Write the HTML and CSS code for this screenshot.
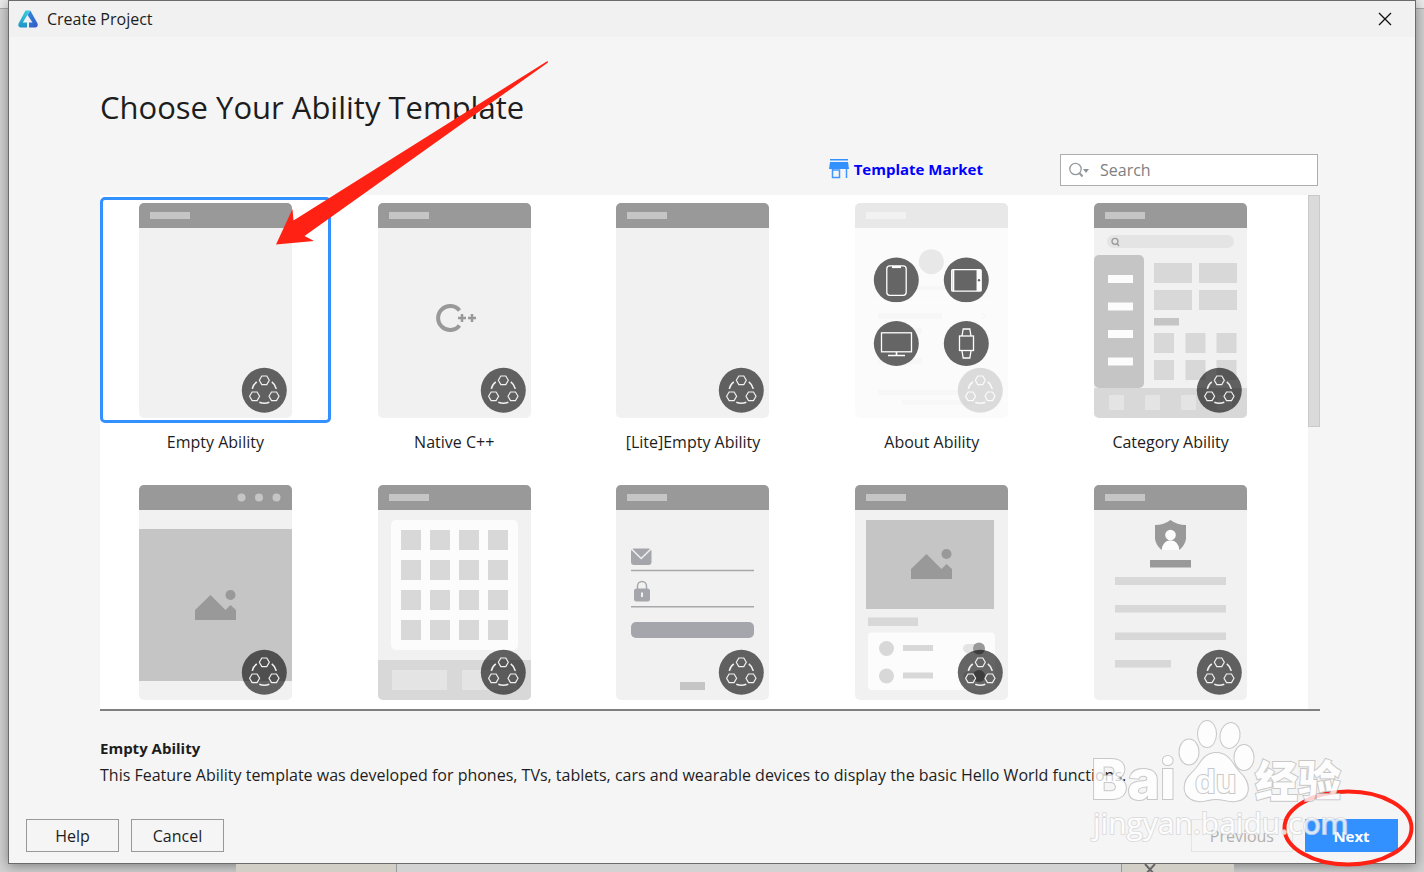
FILE: index.html
```html
<!DOCTYPE html>
<html lang="en">
<head>
<meta charset="utf-8">
<title>Create Project</title>
<link rel="stylesheet" href="styles.css">
</head>
<body>
<svg class="defs" aria-hidden="true">
  <defs>
    <g id="frame">
      <rect width="153" height="215" rx="5" fill="#f1f1f1"/>
      <path d="M0 25V5a5 5 0 0 1 5-5h143a5 5 0 0 1 5 5v20z" fill="#999"/>
    </g>
    <rect id="caption" x="11" y="9" width="40" height="7" fill="#c5c5c5"/>
    <path id="hex" d="M-5 0L-2.5-4.3h5L5 0L2.5 4.3h-5z"/>
    <g id="badge">
      <circle cx="125.3" cy="187.3" r="22.5" fill="#000" fill-opacity=".6"/>
      <g transform="translate(125.3 187.3)" fill="none" stroke="#f1f1f1" stroke-width="1.2">
        <use href="#hex" y="-10"/>
        <use href="#hex" x="-9.7" y="6"/>
        <use href="#hex" x="9.7" y="6"/>
        <path d="M-12-1.5Q-11-6-7.5-8.5M12-1.5Q11-6 7.5-8.5M-5 12Q0 14 5 12" stroke-width="1.6"/>
      </g>
    </g>
    <g id="photo" fill="#999">
      <path d="M56 15L71.500 0L86.500 15L91.500 10L97 15V25H56z"/>
      <circle cx="91.500" cy="0" r="5"/>
    </g>
  </defs>
</svg>

<main class="dialog">
  <header class="titlebar">
    <svg class="logo" viewBox="0 0 20 18" aria-hidden="true">
      <defs>
        <linearGradient id="lg1" x1="0" y1="0" x2="0" y2="1"><stop offset="0" stop-color="#35d0da"/><stop offset="1" stop-color="#1e93c8"/></linearGradient>
        <linearGradient id="lg2" x1="0" y1="0" x2="1" y2="1"><stop offset="0" stop-color="#2c8ce0"/><stop offset="1" stop-color="#3558c4"/></linearGradient>
      </defs>
      <path d="M7.500 0.500H12L4.800 12.500H9V17.500H2.500Q-0.500 17 0.600 13.500z" fill="url(#lg1)"/>
      <path d="M9.500 5L12.300 0.500L19.500 13.500Q20.500 17 17.500 17.500H11V12.500H14.500z" fill="url(#lg2)"/>
    </svg>
    <span class="titlebar-text">Create Project</span>
    <button class="close" type="button" aria-label="Close">
      <svg viewBox="0 0 14 14"><path d="M1 1L13 13M13 1L1 13" stroke="#111" stroke-width="1.3" fill="none"/></svg>
    </button>
  </header>

  <section class="content">
    <h1>Choose Your Ability Template</h1>
    <div class="tools">
      <a class="market" href="#">
        <svg viewBox="0 0 20 20" aria-hidden="true">
          <path d="M1 0h18v1.500H1zM1 3h18l1 7H0z" fill="#3391ff"/>
          <path d="M3.500 10v8.500h7v-7.500h-7M17.500 10v9" fill="none" stroke="#3f97ff" stroke-width="1.500"/>
        </svg>
        <span>Template Market</span>
      </a>
      <label class="search">
        <svg viewBox="0 0 20 16" aria-hidden="true">
          <circle cx="6.500" cy="7" r="5.700" fill="none" stroke="#949a9e" stroke-width="1.300"/>
          <path d="M10.500 11L13.500 14.500" stroke="#949a9e" stroke-width="2"/>
          <path d="M14 7h6l-3 4z" fill="#8b9196"/>
        </svg>
        <input type="search" placeholder="Search" aria-label="Search">
      </label>
    </div>

    <div class="list">
      <div class="grid">
        <button class="card selected" type="button">
          <span class="thumb"><svg viewBox="0 0 153 215"><use href="#frame"/><use href="#caption"/><use href="#badge"/></svg></span>
          <span class="name">Empty Ability</span>
        </button>
        <button class="card" type="button">
          <span class="thumb"><svg viewBox="0 0 153 215"><use href="#frame"/><use href="#caption"/>
            <path d="M81.500 107.500A12 12 0 1 0 81.500 122.500" fill="none" stroke="#999" stroke-width="4"/>
            <path d="M80 115h8M84 111v8M90 115h8M94 111v8" stroke="#999" stroke-width="2.500"/>
            <use href="#badge"/></svg></span>
          <span class="name">Native C++</span>
        </button>
        <button class="card" type="button">
          <span class="thumb"><svg viewBox="0 0 153 215"><use href="#frame"/><use href="#caption"/><use href="#badge"/></svg></span>
          <span class="name">[Lite]Empty Ability</span>
        </button>
        <button class="card" type="button">
          <span class="thumb"><svg viewBox="0 0 153 215">
            <g opacity=".22"><use href="#frame"/><use href="#caption"/><circle cx="76.300" cy="58.700" r="12.500" fill="#999"/>
              <path d="M50 83h50v4H50zM23 110h64v6H23zM23 125h44v6H23zM23 155h44v6H23zM23 187h80v5H23zM47 197h70v5H47z" fill="#dcdcdc"/>
              <path d="M127 110l3 3-3 3" fill="none" stroke="#ccc"/><use href="#badge"/></g>
            <g fill="#656565"><circle cx="41.300" cy="77" r="22.500"/><circle cx="111.300" cy="77" r="22.500"/><circle cx="41.300" cy="140.500" r="22.500"/><circle cx="111.300" cy="140.500" r="22.500"/></g>
            <path d="M16 99.300h120v2H16z" fill="#fcfcfc"/>
            <g fill="none" stroke="#fff" stroke-width="1.300">
              <rect x="31.800" y="62.800" width="19.400" height="29.500" rx="3"/>
              <path d="M37 64h9" stroke-width="2.200"/>
              <rect x="96.700" y="66.700" width="29.500" height="21.500" rx="1"/>
              <path d="M98.300 67v21" stroke-width="2"/>
              <path d="M123.800 67v21" stroke-width="4.500"/>
              <rect x="26.500" y="129.800" width="30" height="19"/>
              <path d="M33 152.500h17M41.500 149v3" stroke-width="1.600"/>
              <rect x="104.500" y="133" width="14" height="14.500"/>
              <path d="M107 133l1.200-7h6.600l1.200 7M107 148l1.200 7h6.600l1.200-7"/>
            </g>
            <circle cx="124" cy="77.300" r="1.200" fill="#656565"/></svg></span>
          <span class="name">About Ability</span>
        </button>
        <button class="card" type="button">
          <span class="thumb"><svg viewBox="0 0 153 215"><use href="#frame"/><use href="#caption"/>
            <rect x="13" y="32" width="127" height="13" rx="6.500" fill="#e4e4e4"/>
            <path d="M24 38.300a3 3 0 1 0-6 0a3 3 0 1 0 6 0M23 40.500l2 2.500" fill="none" stroke="#999" stroke-width="1.300"/>
            <path d="M0 185h153v25a5 5 0 0 1-5 5H5a5 5 0 0 1-5-5z" fill="#d8d8d8"/>
            <rect x="0" y="52" width="50" height="133" rx="5" fill="#c5c5c5"/>
            <path d="M14 72h25v8H14zM14 99.500h25v8H14zM14 127h25v8H14zM14 154.500h25v8H14z" fill="#fcfcfc"/>
            <path d="M60 60h38v20H60zM105 60h38v20h-38zM60 87h38v20H60zM105 87h38v20h-38zM60 130h20v20H60zM91.500 130h20v20h-20zM122.500 130h20v20h-20zM60 157h20v20H60zM91.500 157h20v20h-20zM122.500 157h20v20h-20z" fill="#d8d8d8"/>
            <path d="M60 115h25v7.500H60z" fill="#c5c5c5"/>
            <path d="M15 192h15v15H15zM51 192h15v15H51zM87 192h15v15H87zM123 192h15v15h-15z" fill="#e4e4e4"/>
            <use href="#badge"/></svg></span>
          <span class="name">Category Ability</span>
        </button>

        <button class="card" type="button" aria-label="Full screen image template">
          <span class="thumb"><svg viewBox="0 0 153 215"><use href="#frame"/>
            <g fill="#c5c5c5"><circle cx="102.500" cy="12.500" r="4"/><circle cx="120" cy="12.500" r="4"/><circle cx="137.500" cy="12.500" r="4"/><path d="M0 44h153v152H0z"/></g>
            <use href="#photo" y="110"/><use href="#badge"/></svg></span>
        </button>
        <button class="card" type="button" aria-label="Grid template">
          <span class="thumb"><svg viewBox="0 0 153 215"><use href="#frame"/><use href="#caption"/>
            <rect x="13" y="35" width="127" height="130" rx="5" fill="#fcfcfc"/>
            <path d="M23 45h20v20H23zM52 45h20v20H52zM81 45h20v20H81zM110 45h20v20h-20zM23 75h20v20H23zM52 75h20v20H52zM81 75h20v20H81zM110 75h20v20h-20zM23 105h20v20H23zM52 105h20v20H52zM81 105h20v20H81zM110 105h20v20h-20zM23 135h20v20H23zM52 135h20v20H52zM81 135h20v20H81zM110 135h20v20h-20z" fill="#d8d8d8"/>
            <path d="M0 175h153v35a5 5 0 0 1-5 5H5a5 5 0 0 1-5-5z" fill="#d8d8d8"/>
            <path d="M14 185h55v20H14zM84 185h55v20H84z" fill="#e4e4e4"/>
            <use href="#badge"/></svg></span>
        </button>
        <button class="card" type="button" aria-label="Login template">
          <span class="thumb"><svg viewBox="0 0 153 215"><use href="#frame"/><use href="#caption"/>
            <rect x="15" y="63.500" width="20.500" height="16.500" rx="3" fill="#a5a6ab"/>
            <path d="M15.500 64l9.700 9.500L35 64" fill="none" stroke="#f1f1f1" stroke-width="1.500"/>
            <path d="M15 85.500h123M15 121.700h123" stroke="#a8a8aa" stroke-width="1.400"/>
            <rect x="18" y="103.500" width="16" height="13" rx="2.500" fill="#a5a6ab"/>
            <path d="M21.500 104v-3a4.500 4.500 0 0 1 9 0v3" fill="none" stroke="#a5a6ab" stroke-width="1.400"/>
            <path d="M26 107.500v4.500" stroke="#f1f1f1" stroke-width="2"/>
            <rect x="15" y="137" width="123" height="16" rx="5" fill="#a5a6ab"/>
            <path d="M64 197h25v8H64z" fill="#c5c5c5"/>
            <use href="#badge"/></svg></span>
        </button>
        <button class="card" type="button" aria-label="Settings template">
          <span class="thumb"><svg viewBox="0 0 153 215"><use href="#frame"/><use href="#caption"/>
            <path d="M11 35h128v89H11z" fill="#c5c5c5"/><use href="#photo" y="69"/>
            <path d="M13 132.500h50v8.500H13z" fill="#d8d8d8"/>
            <rect x="13" y="147.500" width="127" height="57.500" rx="4" fill="#fcfcfc"/>
            <g fill="#d8d8d8"><circle cx="31.500" cy="163.500" r="7.500"/><circle cx="31.500" cy="191" r="7.500"/><path d="M48 160h30v6H48zM48 187.500h30v6H48z"/></g>
            <rect x="108" y="159" width="22" height="9" rx="4.500" fill="#e4e4e4"/><rect x="108" y="186.500" width="22" height="9" rx="4.500" fill="#e4e4e4"/>
            <g fill="#999"><circle cx="124" cy="163.500" r="6"/><circle cx="124" cy="191" r="6"/></g>
            <use href="#badge"/></svg></span>
        </button>
        <button class="card" type="button" aria-label="Privacy template">
          <span class="thumb"><svg viewBox="0 0 153 215"><use href="#frame"/><use href="#caption"/>
            <path d="M76.500 35Q83 40 92 40V54Q91 60 85.500 65Q84 55.500 76.500 55.500Q69 55.500 67.500 65Q62 60 61 54V40Q70 40 76.500 35z" fill="#999"/>
            <circle cx="76.500" cy="50" r="5.300" fill="#fcfcfc"/>
            <path d="M68 65Q69 55.500 76.500 55.500Q84 55.500 85 65z" fill="#fcfcfc"/>
            <path d="M56 75h41v7.500H56z" fill="#999"/>
            <path d="M21 92h111v8H21zM21 120h111v7.500H21zM21 147.500h111v7.500H21zM21 175h56v7.500H21z" fill="#d8d8d8"/>
            <use href="#badge"/></svg></span>
        </button>
      </div>
      <div class="scrollbar"><div class="scroll-thumb"></div></div>
    </div>

    <div class="summary">
      <h2>Empty Ability</h2>
      <p>This Feature Ability template was developed for phones, TVs, tablets, cars and wearable devices to display the basic Hello World functions.</p>
    </div>
  </section>

  <footer class="actions">
    <button type="button">Help</button>
    <button type="button">Cancel</button>
    <button class="previous" type="button" disabled>Previous</button>
    <button class="next" type="button">Next</button>
  </footer>
</main>

<div class="backdrop" aria-hidden="true">
  <span class="seg tan"></span>
  <span class="seg light"></span>
  <span class="seg tan short"><svg viewBox="0 0 12 12"><path d="M1 0L11 11M11 0L1 11" stroke="#666" stroke-width="2"/></svg></span>
</div>

<svg class="arrow" viewBox="0 0 272 184" aria-hidden="true">
  <path d="M0 183.500L16.500 148L17.500 159.500L271.500 0L272 1.500L28.500 175L38 180z" fill="#ff2113"/>
</svg>

<svg class="ring" viewBox="0 0 132 78" aria-hidden="true">
  <ellipse cx="66" cy="39" rx="63.500" ry="36.500" fill="none" stroke="#ff2113" stroke-width="4"/>
</svg>

<svg class="watermark" viewBox="0 0 260 130" aria-hidden="true">
  <g class="mark">
    <text class="bai" x="1" y="84">Bai</text>
    <ellipse cx="99" cy="37" rx="9.500" ry="12.500"/>
    <ellipse cx="117" cy="19" rx="9" ry="13"/>
    <ellipse cx="140" cy="20.500" rx="9.500" ry="12.500" transform="rotate(10 140 20.500)"/>
    <ellipse cx="154" cy="42.500" rx="9.500" ry="12.500"/>
    <path d="M126 38C140 38 142 50 150 58C162 69 160 85 145 86C138 87 133 84 126 84C119 84 115 87 108 86C92 84 91 68 102 58C111 50 113 38 126 38z"/>
    <text class="du" x="105" y="78">du</text>
    <text class="cjk" x="165" y="82">经验</text>
    <text class="site" x="3" y="119">jingyan.baidu.com</text>
  </g>
</svg>
</body>
</html>
```
FILE: styles.css
```css
* {
  box-sizing: border-box;
}

body {
  margin: 0;
  height: 100vh;
  display: flex;
  flex-direction: column;
  position: relative;
  overflow: hidden;
  background: linear-gradient(#ececec 0 8px, #aaa 8px 9px, #d2d2d2 9px);
  color: #1d1d1d;
  font: 16px/20px "Open Sans", "Noto Sans", sans-serif;
}

button,
input {
  font: inherit;
  color: inherit;
}

.defs {
  position: absolute;
  width: 0;
  height: 0;
}

.dialog {
  flex: 1;
  min-height: 0;
  margin: 0 8px;
  display: flex;
  flex-direction: column;
  background: #f5f5f5;
  border: 1px solid #6b6b6b;
  box-shadow: 0 2px 12px rgba(0, 0, 0, 0.4);
}

.titlebar {
  height: 36px;
  flex: none;
  display: flex;
  align-items: center;
  padding: 0 23px 0 9px;
  background: #f1f1f1;
}

.logo {
  width: 20px;
  height: 18px;
}

.titlebar-text {
  margin-left: 9px;
}

.close {
  margin-left: auto;
  padding: 0;
  width: 14px;
  height: 14px;
  border: 0;
  background: none;
}

.close svg {
  display: block;
  width: 100%;
}

.content {
  flex: 1;
  min-height: 0;
  display: flex;
  flex-direction: column;
  padding: 48px 95px 0 91px;
}

h1 {
  margin: 0;
  font-size: 31px;
  line-height: 44px;
  font-weight: 400;
}

.tools {
  display: flex;
  justify-content: flex-end;
  align-items: center;
  margin: 25px 2px 9px 0;
}

.market {
  display: flex;
  align-items: center;
  gap: 5px;
  margin-right: 77px;
  padding-bottom: 3px;
  color: #00f;
  font-size: 15px;
  font-weight: 700;
  text-decoration: none;
}

.market svg {
  width: 20px;
  height: 20px;
}

.search {
  display: flex;
  align-items: center;
  gap: 11px;
  width: 258px;
  height: 32px;
  padding: 0 8px;
  border: 1px solid #adadad;
  background: #fff;
}

.search svg {
  flex: none;
  width: 20px;
  height: 16px;
}

.search input {
  flex: 1;
  min-width: 0;
  padding: 0;
  border: 0;
  outline: 0;
  background: none;
}

.search input::placeholder {
  color: #808080;
  opacity: 1;
}

.list {
  flex: 1;
  min-height: 0;
  display: flex;
  overflow: hidden;
  border-bottom: 2px solid #808080;
}

.grid {
  flex: 1;
  display: grid;
  grid-template-columns: repeat(5, 1fr);
  grid-auto-rows: 273px;
  gap: 9px 8px;
  padding: 2px 22px 0 0;
  background: #fff;
}

.card {
  display: flex;
  flex-direction: column;
  min-width: 0;
  padding: 0;
  border: 0;
  background: none;
}

.thumb {
  display: flex;
  justify-content: center;
  width: 100%;
  padding: 3px 0 2px;
  border: 3px solid transparent;
  border-radius: 5px;
}

.thumb svg {
  width: 153px;
  height: 215px;
}

.selected .thumb {
  border-color: #3391ff;
}

.name {
  width: 100%;
  margin-top: 9px;
  text-align: center;
}

.scrollbar {
  width: 12px;
}

.scroll-thumb {
  height: 232px;
  background: #dadada;
  border: 1px solid #c9c9c9;
}

.summary {
  padding: 27px 0 34px;
}

.summary h2 {
  margin: 0;
  font-size: 15px;
  line-height: 20px;
}

.summary p {
  margin: 7px 0 0;
  white-space: nowrap;
}

.actions {
  flex: none;
  display: flex;
  gap: 12px;
  padding: 0 17px 11px;
}

.actions button {
  min-width: 93px;
  height: 33px;
  padding: 0 18px;
  border: 1px solid #999;
  background: #f5f5f5;
}

.actions .previous {
  margin-left: auto;
  border-color: #e4e4e4;
  color: #b0b0b0;
}

.actions .next {
  border-color: #3391ff;
  background: #3391ff;
  color: #fff;
  font-size: 15px;
  font-weight: 700;
}

.backdrop {
  flex: none;
  height: 8px;
  display: flex;
  margin: 0 28px 0 236px;
}

.seg {
  width: 160px;
  background: #d2d0c6;
}

.light {
  flex: 1;
  border-left: 1px solid #999;
  border-right: 1px solid #999;
  background: #d3d3d3;
}

.short {
  width: 112px;
  padding-left: 22px;
  margin-right: 162px;
}

.short svg {
  display: block;
  width: 12px;
  height: 12px;
}

.arrow {
  position: absolute;
  left: 276px;
  top: 61px;
  width: 272px;
}

.watermark {
  position: absolute;
  right: 74px;
  bottom: 27px;
  width: 260px;
  overflow: visible;
  opacity: 0.8;
}

.mark {
  fill: #fff;
  stroke: #bdbdbd;
  stroke-width: 2px;
  paint-order: stroke;
}

.bai {
  font: 800 55px "Inter", "Liberation Sans", sans-serif;
}

.du {
  font: 700 34px "Liberation Sans", sans-serif;
}

.cjk {
  font: 900 43px "Noto Sans CJK SC", sans-serif;
}

.site {
  font: 400 30px "Open Sans", sans-serif;
  stroke: #d8d8d8;
}

.ring {
  position: absolute;
  right: 10px;
  bottom: 5px;
  width: 132px;
}
```
